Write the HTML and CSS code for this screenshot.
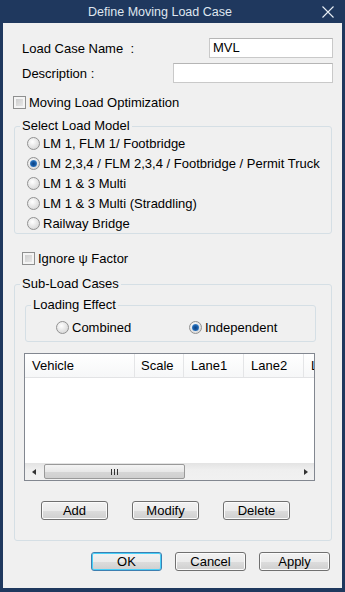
FILE: index.html
```html
<!DOCTYPE html>
<html>
<head>
<meta charset="utf-8">
<link rel="stylesheet" href="styles.css">
</head>
<body>
<div class="window">
  <div class="titlebar">
    <div class="title">Define Moving Load Case</div>
    <div class="close">
      <svg width="12" height="12" viewBox="0 0 12 12"><path d="M0.5 0.5 L11.5 11.5 M11.5 0.5 L0.5 11.5" stroke="#e8eef5" stroke-width="1.1" fill="none"/></svg>
    </div>
  </div>
  <div class="content">
    <div class="form">
      <div class="field-row">
        <span class="label">Load Case Name&nbsp; :</span>
        <div class="input name-input">MVL</div>
      </div>
      <div class="field-row row2">
        <span class="label">Description :</span>
        <div class="input desc-input"></div>
      </div>
    </div>

    <div class="check-row opt-row"><span class="checkbox"></span><span>Moving Load Optimization</span></div>

    <fieldset class="group model-group">
      <legend>Select Load Model</legend>
      <div class="radio-list">
        <div class="radio-row"><span class="radio"></span><span>LM 1, FLM 1/ Footbridge</span></div>
        <div class="radio-row"><span class="radio checked"></span><span>LM 2,3,4 / FLM 2,3,4 / Footbridge / Permit Truck</span></div>
        <div class="radio-row"><span class="radio"></span><span>LM 1 &amp; 3 Multi</span></div>
        <div class="radio-row"><span class="radio"></span><span>LM 1 &amp; 3 Multi (Straddling)</span></div>
        <div class="radio-row"><span class="radio"></span><span>Railway Bridge</span></div>
      </div>
    </fieldset>

    <div class="check-row ignore-row"><span class="checkbox"></span><span>Ignore &psi; Factor</span></div>

    <fieldset class="group sub-group">
      <legend>Sub-Load Cases</legend>
      <fieldset class="group effect-group">
        <legend>Loading Effect</legend>
        <div class="effect-row">
          <div class="radio-item combined"><span class="radio"></span><span>Combined</span></div>
          <div class="radio-item"><span class="radio checked"></span><span>Independent</span></div>
        </div>
      </fieldset>

      <div class="listbox">
        <div class="list-header">
          <div class="col col-vehicle">Vehicle</div>
          <div class="col col-scale">Scale</div>
          <div class="col col-lane">Lane1</div>
          <div class="col col-lane">Lane2</div>
          <div class="col col-last">Lane3</div>
        </div>
        <div class="list-body"></div>
        <div class="hscroll">
          <div class="arrow-btn"><span class="tri-left"></span></div>
          <div class="thumb"><span class="grip"></span><span class="grip"></span><span class="grip"></span></div>
          <div class="track-space"></div>
          <div class="arrow-btn"><span class="tri-right"></span></div>
        </div>
      </div>

      <div class="sub-buttons">
        <button class="btn sub-btn">Add</button>
        <button class="btn sub-btn">Modify</button>
        <button class="btn sub-btn">Delete</button>
      </div>
    </fieldset>

    <div class="dialog-buttons">
      <button class="btn dlg-btn default">OK</button>
      <button class="btn dlg-btn">Cancel</button>
      <button class="btn dlg-btn">Apply</button>
    </div>
  </div>
</div>
</body>
</html>
```

FILE: styles.css
```css
* { box-sizing: border-box; }
html, body { margin: 0; padding: 0; }
body {
  font-family: "Liberation Sans", Arial, sans-serif;
  font-size: 13px;
  color: #000;
  background: #1f385e;
}
.window {
  width: 345px;
  height: 592px;
  background: #1f385e;
  padding: 0 3px 4px 3px;
  display: flex;
  flex-direction: column;
}
.titlebar {
  height: 23px;
  display: flex;
  align-items: center;
  flex: none;
}
.title {
  flex: 1;
  text-align: center;
  color: #dfe7f0;
  font-size: 12.5px;
  padding-top: 1px;
}
.close {
  width: 25px;
  display: flex;
  padding-left: 5px;
  padding-top: 1px;
}
.close svg { display: block; }
.content {
  flex: 1;
  background: #f0f0f0;
  display: flex;
  flex-direction: column;
}
.form { padding: 15px 9px 0 19px; }
.field-row {
  display: flex;
  align-items: center;
  height: 20px;
}
.row2 { margin-top: 5px; }
.label { white-space: pre; }
.input {
  margin-left: auto;
  height: 20px;
  background: #fff;
  border: 1px solid #c9c9c9;
  border-top-color: #b5b5b5;
  padding: 1px 0 0 3px;
  line-height: 16px;
}
.name-input { width: 124px; }
.desc-input { width: 160px; }

.check-row {
  display: flex;
  align-items: center;
  height: 16px;
  gap: 3px;
}
.opt-row { margin: 11px 0 0 10px; }
.ignore-row { margin: 16px 0 0 19px; }
.checkbox {
  width: 13px;
  height: 13px;
  border: 1px solid #8e8f8f;
  background: linear-gradient(135deg, #c6c6c6, #eeeeee);
  box-shadow: inset 0 0 0 2px #f4f4f4;
  flex: none;
}

.group {
  margin: 0;
  padding: 0;
  border: 1px solid #d5dfe5;
  border-radius: 3px;
  min-width: 0;
}
.group legend {
  margin-left: 5px;
  padding: 0 2px;
  line-height: 14px;
  height: 14px;
}
.model-group {
  margin: 9px 10px 0 11px;
}
.radio-list { padding-left: 12px; }
.radio-row {
  display: flex;
  align-items: center;
  height: 20px;
  gap: 3px;
}
.radio {
  width: 13px;
  height: 13px;
  border-radius: 50%;
  border: 1px solid #929292;
  background: radial-gradient(circle at 40% 35%, #ffffff 0%, #e6e6e6 50%, #cfcfcf 100%);
  flex: none;
  position: relative;
}
.radio.checked::after {
  content: "";
  position: absolute;
  left: 2px;
  top: 2px;
  width: 7px;
  height: 7px;
  border-radius: 50%;
  background: radial-gradient(circle at 50% 55%, #0c3f7d 0%, #1a5fab 45%, #6ab0ea 100%);
}

.sub-group {
  margin: 11px 10px 0 11px;
  padding: 0 0 20px 0;
}
.effect-group {
  margin: 7px 15px 0 10px;
  padding: 0 0 4px 0;
}
.effect-row {
  display: flex;
  height: 20px;
  margin-top: 5px;
  padding-left: 30px;
}
.radio-item {
  display: flex;
  align-items: center;
  gap: 3px;
}
.combined { width: 133px; }

.listbox {
  margin: 11px 0 0 9px;
  width: 291px;
  height: 128px;
  border: 1px solid #828790;
  background: #fff;
  display: flex;
  flex-direction: column;
  overflow: hidden;
}
.list-header {
  display: flex;
  height: 24px;
  flex: none;
  background: linear-gradient(#ffffff, #f6f7f8);
  border-bottom: 1px solid #e2e3e5;
  white-space: nowrap;
  overflow: hidden;
}
.col {
  flex: none;
  line-height: 23px;
  padding-left: 7px;
  border-right: 1px solid #e4e5e7;
}
.col-vehicle { width: 110px; }
.col-scale { width: 49px; padding-left: 6px; }
.col-lane { width: 60px; }
.col-last { width: 60px; border-right: none; }
.list-body { flex: 1; }
.hscroll {
  height: 17px;
  flex: none;
  display: flex;
  align-items: stretch;
  background: linear-gradient(#e3e3e3, #efefef 40%, #f1f1f1);
}
.arrow-btn {
  width: 17px;
  display: flex;
  align-items: center;
  justify-content: center;
}
.tri-left {
  width: 0; height: 0;
  border-top: 3.5px solid transparent;
  border-bottom: 3.5px solid transparent;
  border-right: 4px solid #333;
}
.tri-right {
  width: 0; height: 0;
  border-top: 3.5px solid transparent;
  border-bottom: 3.5px solid transparent;
  border-left: 4px solid #333;
}
.thumb {
  margin: 1px 0 1px 2px;
  width: 141px;
  border: 1px solid #999;
  border-radius: 2px;
  background: linear-gradient(#f4f4f4, #e8e8e8 50%, #d6d6d6 51%, #cfcfcf);
  display: flex;
  justify-content: center;
  align-items: center;
  gap: 2px;
}
.grip {
  width: 1px;
  height: 6px;
  background: #333;
}
.track-space { flex: 1; }

.btn {
  font-family: "Liberation Sans", Arial, sans-serif;
  font-size: 13px;
  color: #000;
  height: 19px;
  padding: 0;
  border: 1px solid #707070;
  border-radius: 3px;
  background: linear-gradient(#f2f2f2, #ebebeb 50%, #dddddd 51%, #cfcfcf);
  box-shadow: inset 0 0 0 1px #fbfbfb;
  line-height: 16px;
}
.sub-buttons {
  display: flex;
  gap: 24px;
  margin: 20px 0 0 26px;
}
.sub-btn { width: 67px; }
.dialog-buttons {
  display: flex;
  justify-content: flex-end;
  gap: 13px;
  margin-top: 11px;
  padding-right: 12px;
}
.dlg-btn { width: 71px; }
.dlg-btn.default {
  border-color: #3c7fb1;
  box-shadow: inset 0 0 0 1px #48d0f8;
}
```
